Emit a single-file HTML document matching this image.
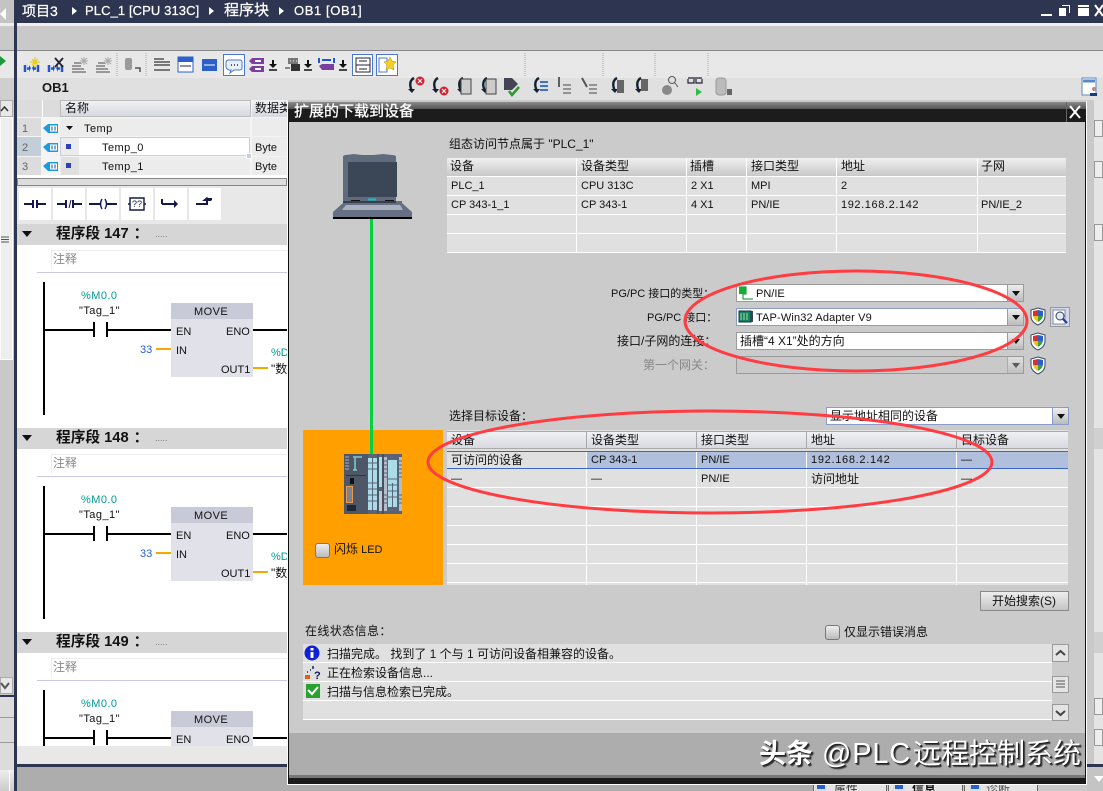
<!DOCTYPE html>
<html><head><meta charset="utf-8"><style>
html,body{margin:0;padding:0}
body{position:relative;width:1103px;height:791px;overflow:hidden;background:#c9c9c9;font-family:"Liberation Sans","Noto Sans CJK SC",sans-serif;font-size:11px;color:#111}
div{position:absolute;box-sizing:border-box}
.t{position:absolute;white-space:nowrap;height:16px;line-height:16px;font-size:11px}
.c{font-size:12px}
.h{background:linear-gradient(#f0f1f4,#d6d9e0)}
.l{background:#fff}
.sel{border:1px solid #9a9a9a;background:#fff}
.ar{right:0;top:0;bottom:0;width:16px;background:linear-gradient(#eee,#bbb);border-left:1px solid #9a9a9a}
.ar:after{content:"";position:absolute;left:4px;top:6px;border:4px solid transparent;border-top:5px solid #111;border-bottom:0}
.cb{width:15px;height:15px;border:1px solid #777;border-radius:3px;background:linear-gradient(#eee,#bbb)}
.sb{background:#e4e4e4;border:1px solid #9a9a9a}
.sec{left:39px;top:2px;font-size:14.700px;font-weight:bold}
.sec i{font-style:normal;margin-left:5px}
.ls{letter-spacing:.45px}
svg{position:absolute;overflow:visible}
</style></head><body>

<!-- left strip -->
<div style="left:0;top:0;width:14px;height:23px;background:#c4c4c4"></div>
<div style="left:0;top:8px;width:0;height:0;border:6px solid transparent;border-left:0;border-right:6px solid #fff"></div>
<div style="left:0;top:23px;width:14px;height:3px;background:#eee"></div>
<div style="left:0;top:50px;width:14px;height:28px;background:#e8e8e8;border-top:1px solid #888"></div>
<div style="left:0;top:78px;width:14px;height:22px;background:#cfcfcf"></div>
<div style="left:0;top:100px;width:13px;height:17px;background:#e8e8e8;border:1px solid #aaa"></div>
<div style="left:0;top:117px;width:13px;height:243px;background:#eee;border:1px solid #fff"></div>
<div style="left:0;top:360px;width:14px;height:317px;background:#c9c9c9"></div>
<div style="left:0;top:677px;width:13px;height:17px;background:#e8e8e8;border:1px solid #aaa"></div>
<div style="left:0;top:695px;width:17px;height:2px;background:#2d3550"></div>
<div style="left:0;top:697px;width:14px;height:94px;background:#dcdcdc"></div>
<div style="left:0;top:717px;width:14px;height:1px;background:#999"></div>
<div style="left:0;top:742px;width:14px;height:1px;background:#999"></div>
<div style="left:0;top:770px;width:14px;height:21px;background:linear-gradient(#eee,#ccc)"></div>
<div style="left:9px;top:770px;width:1px;height:21px;background:#fff"></div>
<svg style="left:0;top:0" width="14" height="80"><path d="M0 56l6 5-6 5z" fill="#1f9a3a"/></svg>
<div style="left:14px;top:0;width:3px;height:791px;background:#2d3550"></div>

<!-- title bar -->
<div style="left:17px;top:0;width:1086px;height:23px;background:#2d3550"></div>
<div style="left:17px;top:23px;width:1086px;height:3px;background:#efefef"></div>
<div style="left:17px;top:26px;width:1086px;height:24px;background:#c9c9c9"></div>
<div class="t" style="left:22px;top:3px;color:#fff;font-size:14px;-webkit-text-stroke:.25px #fff">项目3</div>
<div style="left:72px;top:7px;border:4px solid transparent;border-left:5px solid #fff;border-right:0"></div>
<div class="t" style="left:85px;top:3px;color:#fff;font-size:13px;letter-spacing:.1px;-webkit-text-stroke:.25px #fff">PLC_1 [CPU 313C]</div>
<div style="left:209px;top:7px;border:4px solid transparent;border-left:5px solid #fff;border-right:0"></div>
<div class="t" style="left:224px;top:3px;color:#fff;font-size:15px;-webkit-text-stroke:.25px #fff">程序块</div>
<div style="left:279px;top:7px;border:4px solid transparent;border-left:5px solid #fff;border-right:0"></div>
<div class="t" style="left:294px;top:3px;color:#fff;font-size:13px;letter-spacing:.6px;-webkit-text-stroke:.25px #fff">OB1 [OB1]</div>
<div style="left:1041px;top:14px;width:11px;height:2px;background:#fff"></div>
<div style="left:1059px;top:8px;width:7px;height:8px;background:#fff"></div>
<div style="left:1062px;top:5px;width:8px;height:8px;border:1px solid #fff;border-left:0;border-bottom:0"></div>
<div style="left:1078px;top:5px;width:11px;height:11px;background:#fff;border-top:3px solid #fff"></div>
<div style="left:1078px;top:7px;width:11px;height:1px;background:#2d3550"></div>
<svg style="left:0;top:0" width="1103" height="30"><path d="M1095 5l8 11M1103 5l-8 11" stroke="#fff" stroke-width="2"/></svg>

<!-- toolbar -->
<div style="left:17px;top:50px;width:1086px;height:28px;background:#e8e8e8;border-top:1px solid #8a8a8a"></div>
<div style="left:17px;top:78px;width:1086px;height:22px;background:#e0e0e0"></div>
<div class="t" style="left:42px;top:80px;font-size:13px;font-weight:bold;color:#1b1b1b">OB1</div>
<div style="left:223px;top:54px;width:22px;height:22px;background:#fff;border:1px solid #4a78cf"></div>
<div style="left:352px;top:54px;width:21px;height:22px;background:#fff;border:1px solid #4a78cf"></div>
<div style="left:376px;top:54px;width:22px;height:22px;background:#fff;border:1px solid #4a78cf"></div>

<svg style="left:0;top:0" width="1103" height="100">
<defs>
<g id="kh"><path d="M1 9v7M14 9v7M3 12.500h3M12 12.500h-3" stroke="#2256cc" stroke-width="2.500" fill="none"/><path d="M5 9l2 3-2 4zM10 9l-2 3 2 4z" fill="#2256cc"/></g>
<g id="gl"><path d="M0 9h9M0 12h12M0 15h14M2 6h7" stroke="#999" stroke-width="2"/><path d="M12 0v8M8 4h8M9 1l6 6M15 1l-6 6" stroke="#aaa" stroke-width="1"/></g>
<g id="ua"><path d="M7 2C3 4 2 9 5 15" stroke="#123" stroke-width="2.400" fill="none"/><path d="M1 13l4 4 3-4z" fill="#123"/></g>
<g id="dn"><path d="M4 0v6" stroke="#111" stroke-width="2"/><path d="M0 4h8l-4 4z" fill="#111"/><path d="M0 10h8" stroke="#111" stroke-width="1.500"/></g>
<g id="tg"><path d="M0 4l3-3h12v6H3zM0 12l3-3h12v6H3z" fill="#7a3fa0"/><path d="M6 3h6v2H6zM6 11h6v2H6z" fill="#fff"/></g>
<g id="red"><circle cx="0" cy="0" r="4.500" fill="#d42030"/><path d="M-2-2l4 4M2-2l-4 4" stroke="#fff" stroke-width="1.200"/></g>
</defs>
<path d="M117 53v23M146 53v23M525 53v23M603 53v23M655 53v23M708 53v23" stroke="#aaa" stroke-dasharray="1 1"/>
<use href="#kh" x="24" y="56"/><path d="M35 57v10M30 62h10M32 59l6 6M38 59l-6 6" stroke="#e8d020" stroke-width="1.300"/>
<use href="#kh" x="48" y="56"/><path d="M55 58l8 9M63 58l-8 9" stroke="#223" stroke-width="1.800"/>
<use href="#gl" x="72" y="57"/><use href="#gl" x="96" y="57"/>
<rect x="125" y="58" width="7" height="12" rx="2" fill="#9a9a9a"/><path d="M140 72v-4h-5" stroke="#555" stroke-width="1.500" fill="none"/>
<path d="M154 59h10M154 62h16M154 65h16M154 70h16" stroke="#777" stroke-width="2"/>
<rect x="178" y="57" width="15" height="15" fill="#fff" stroke="#2a60c8"/><rect x="178" y="57" width="15" height="5" fill="#2a60c8"/><path d="M180 66h11" stroke="#224"/>
<rect x="202" y="59" width="15" height="12" fill="#2a60c8"/><path d="M204 65h11" stroke="#fff"/>
<path d="M228 60h12a2 2 0 0 1 2 2v6a2 2 0 0 1-2 2h-6l-4 3 1-3a4 4 0 0 1-5-3v-5a3 3 0 0 1 2-2z" fill="#e8f0fa" stroke="#4a78cf"/><path d="M231 65h1M234 65h1M237 65h1" stroke="#223" stroke-width="1.500"/>
<use href="#tg" x="249" y="57"/><use href="#dn" x="269" y="60"/>
<path d="M288 58h10v6h-10z" fill="#777"/><path d="M290 61h1M293 61h1M296 61h1" stroke="#fff"/><rect x="291" y="64" width="9" height="7" fill="#333"/><path d="M285 68h5" stroke="#222"/><use href="#dn" x="304" y="60"/>
<path d="M319 58v5M334 58v5M322 60h9" stroke="#2256cc" stroke-width="2"/><path d="M319 66l3-2h12v6h-12z" fill="#7a3fa0"/><use href="#dn" x="339" y="60"/>
<rect x="356" y="58" width="14" height="14" fill="#fff" stroke="#223"/><path d="M356 65h14M359 61h8M359 69h8" stroke="#223"/>
<rect x="379" y="58" width="8" height="14" fill="#fff" stroke="#4a78cf"/><path d="M390 57l2 4 4 1-3 3 1 5-4-2-4 2 1-5-3-3 4-1z" fill="#f6d020" stroke="#b08810" stroke-width=".5"/>
<use href="#ua" x="407" y="76"/><use href="#red" x="420" y="81"/>
<use href="#ua" x="431" y="76"/><use href="#red" x="444" y="91"/>
<use href="#ua" x="456" y="76"/><rect x="461" y="79" width="10" height="15" fill="#ccc" stroke="#444"/>
<use href="#ua" x="480" y="76"/><rect x="486" y="79" width="10" height="15" fill="#ccc" stroke="#444"/>
<path d="M504 78h8l6 6-6 6h-8z" fill="#445"/><path d="M509 91l3 4 7-8" stroke="#2a9a30" stroke-width="2.500" fill="none"/>
<use href="#ua" x="532" y="76"/><path d="M540 82h8M540 86h8M540 90h8" stroke="#2a60c8" stroke-width="1.700"/>
<path d="M559 77v10" stroke="#333" stroke-width="1.500"/><path d="M563 85h8M563 89h8M563 93h8" stroke="#888" stroke-width="1.700"/>
<path d="M582 78l5 9" stroke="#555" stroke-width="2"/><path d="M589 85h8M589 89h8M589 93h8" stroke="#888" stroke-width="1.700"/>
<use href="#ua" x="610" y="76"/><rect x="617" y="80" width="7" height="13" fill="#666"/>
<use href="#ua" x="634" y="76"/><rect x="641" y="79" width="7" height="12" fill="#666"/>
<circle cx="667" cy="90" r="5" fill="#888"/><circle cx="672" cy="80" r="3.500" fill="none" stroke="#555"/><path d="M675 83l3 4" stroke="#555"/>
<path d="M688 78h14M688 79v4h6v-4M696 79v4h6v-4" fill="none" stroke="#223" stroke-width="1.200"/><path d="M696 88l6 4-6 4z" fill="#2cc040"/>
<rect x="716" y="78" width="10" height="17" rx="3" fill="#bbb" stroke="#999"/><rect x="727" y="89" width="5" height="6" fill="#666"/>
<rect x="1082" y="78" width="14" height="17" fill="#fff" stroke="#5a88c8"/><path d="M1083 81h12" stroke="#5a88c8" stroke-width="3"/><circle cx="1094" cy="89" r="2" fill="#b88"/><path d="M1090 96v-3h7v3z" fill="#1a3a80"/>
</svg>

<!-- left editor table -->
<div style="left:17px;top:100px;width:270px;height:78px;background:#f4f4f4"></div>
<div style="left:17px;top:100px;width:25px;height:17px;background:#dcdcdc"></div>
<div style="left:42px;top:100px;width:18px;height:17px;background:#dcdcdc;border-left:1px solid #fff"></div>
<div class="h" style="left:60px;top:100px;width:191px;height:17px;border:1px solid #bbb"></div>
<div class="h" style="left:252px;top:100px;width:36px;height:17px"></div>
<div class="t c" style="left:65px;top:100px">名称</div>
<div class="t c" style="left:255px;top:100px">数据类型</div>
<div style="left:17px;top:118px;width:24px;height:18px;background:#dcdcdc"></div>
<div style="left:17px;top:137px;width:24px;height:19px;background:#c2ced8"></div>
<div style="left:17px;top:157px;width:24px;height:18px;background:#dcdcdc"></div>
<div style="left:60px;top:118px;width:190px;height:18px;background:#ececec"></div>
<div style="left:60px;top:137px;width:190px;height:19px;background:#fff;border:1px solid #c4d0de"></div>
<div style="left:61px;top:138px;width:18px;height:17px;background:#ececec"></div>
<div style="left:60px;top:157px;width:190px;height:18px;background:#ececec"></div>
<div style="left:61px;top:157px;width:18px;height:18px;background:#e0e0e0"></div>
<div style="left:252px;top:118px;width:36px;height:18px;background:#ececec"></div>
<div style="left:252px;top:137px;width:36px;height:19px;background:#ececec"></div>
<div style="left:252px;top:157px;width:36px;height:18px;background:#ececec"></div>
<div style="left:246px;top:153px;width:6px;height:6px;background:#c4d0de;border:1px solid #fff"></div>
<div class="t" style="left:22px;top:121px;color:#666">1</div>
<div class="t" style="left:22px;top:140px;color:#666">2</div>
<div class="t" style="left:22px;top:159px;color:#666">3</div>
<svg style="left:0;top:0" width="300" height="180">
<defs><g id="rt"><path d="M0 6l5-4h10v9H5z" fill="#1c9ae0"/><rect x="7" y="3.500" width="7" height="6" fill="#fff"/><path d="M9 4.500v4M12 4.500v4" stroke="#16508c"/></g></defs>
<use href="#rt" x="43" y="122"/><use href="#rt" x="43" y="141"/><use href="#rt" x="43" y="160"/>
<path d="M66 126h7l-3.500 4z" fill="#111"/>
<rect x="66" y="144" width="5" height="5" fill="#2a44b8"/><rect x="66" y="163" width="5" height="5" fill="#2a44b8"/>
<path d="M1 111l3.500-4 3.500 4" fill="none" stroke="#333" stroke-width="1.500"/>
<path d="M1 683l4 5 4-5" fill="none" stroke="#555" stroke-width="2"/>
<path d="M1 237h8M1 239.500h8M1 242h8" stroke="#555"/>
</svg>
<div class="t ls" style="left:84px;top:121px">Temp</div>
<div class="t ls" style="left:102px;top:140px">Temp_0</div>
<div class="t ls" style="left:102px;top:159px">Temp_1</div>
<div class="t" style="left:255px;top:140px">Byte</div>
<div class="t" style="left:255px;top:159px">Byte</div>
<div style="left:17px;top:175px;width:270px;height:3px;background:#fff"></div>
<div style="left:17px;top:178px;width:270px;height:8px;background:#ddd;border:1px solid #888"></div>

<!-- LAD toolbar + editor -->
<div style="left:17px;top:186px;width:270px;height:38px;background:#e8e8e8"></div>
<div class="l" style="left:19px;top:188px;width:32px;height:32px"></div>
<div class="l" style="left:53px;top:188px;width:32px;height:32px"></div>
<div class="l" style="left:87px;top:188px;width:32px;height:32px"></div>
<div class="l" style="left:121px;top:188px;width:32px;height:32px"></div>
<div class="l" style="left:155px;top:188px;width:32px;height:32px"></div>
<div class="l" style="left:189px;top:188px;width:32px;height:32px"></div>
<svg style="left:0;top:0" width="300" height="225">
<path d="M24 204h9M33 200v8M37 200v8M37 204h9M57 204h9M66 200v8M73 200v8M73 204h9M89 204h11M106 204h11M162 204h14M196 204h11v-5h5" stroke="#14184a" stroke-width="2" fill="none"/>
<path d="M69 208l2-8" stroke="#14184a"/>
<path d="M102 199q-3 5 0 10M105 199q3 5 0 10" stroke="#14184a" stroke-width="1.400" fill="none"/>
<path d="M162 199v5" stroke="#14184a" stroke-width="2"/>
<path d="M174 200l4 4-4 4z" fill="#14184a"/><path d="M207 197l5 4h-10z" fill="#14184a"/>
<path d="M130 198h14v12h-14zM128 204h2M144 204h2" stroke="#14184a" stroke-width="1.400" fill="none"/>
<text x="132" y="207" font-family="Liberation Sans" font-size="9" fill="#14184a">??</text>
</svg>

<div style="left:17px;top:224px;width:270px;height:522px;background:#fff;overflow:hidden">
  <!-- section 1 -->
  <div style="left:0;top:0;width:270px;height:204px">
    <div style="left:0;top:0;width:270px;height:21px;background:#d6d6d6"></div>
    <div style="left:5px;top:7px;border:5px solid transparent;border-top:6px solid #111;border-bottom:0"></div>
    <div class="t sec">程序段 147<i>：</i></div>
    <div class="t" style="left:138px;top:2px;color:#777;font-size:9px">.....</div>
    <div style="left:34px;top:26px;width:236px;height:20px;border:1px solid #eee;border-right:0;border-bottom:0"></div>
    <div class="t c" style="left:36px;top:27px;color:#888">注释</div>
    <div style="left:20px;top:48px;width:250px;height:1px;background:#c8c8e2"></div>
    <div style="left:26px;top:58px;width:2px;height:133px;background:#000"></div>
    <div style="left:28px;top:105px;width:48px;height:2px;background:#000"></div>
    <div style="left:76px;top:98px;width:2px;height:15px;background:#000"></div>
    <div style="left:89px;top:98px;width:2px;height:15px;background:#000"></div>
    <div style="left:89px;top:105px;width:65px;height:2px;background:#000"></div>
    <div style="left:154px;top:79px;width:82px;height:74px;background:#e0e1e9"></div>
    <div style="left:154px;top:79px;width:82px;height:16px;background:#c8cad8"></div>
    <div style="left:236px;top:105px;width:34px;height:2px;background:#000"></div>
    <div style="left:139px;top:124px;width:15px;height:2px;background:#f5a800"></div>
    <div style="left:236px;top:143px;width:15px;height:2px;background:#f5a800"></div>
    <div class="t ls" style="left:177px;top:80px">MOVE</div>
    <div class="t" style="left:159px;top:100px">EN</div>
    <div class="t" style="left:209px;top:100px">ENO</div>
    <div class="t" style="left:159px;top:119px">IN</div>
    <div class="t" style="left:204px;top:138px">OUT1</div>
    <div class="t" style="left:123px;top:118px;color:#2a60c8">33</div>
    <div class="t ls" style="left:64px;top:64px;color:#00989a">%M0.0</div>
    <div class="t ls" style="left:62px;top:79px">"Tag_1"</div>
    <div class="t" style="left:254px;top:121px;color:#00989a">%D</div>
    <div class="t c" style="left:254px;top:137px">"数</div>
  </div>
  <!-- section 2 -->
  <div style="left:0;top:204px;width:270px;height:204px">
    <div style="left:0;top:0;width:270px;height:21px;background:#d6d6d6"></div>
    <div style="left:5px;top:7px;border:5px solid transparent;border-top:6px solid #111;border-bottom:0"></div>
    <div class="t sec">程序段 148<i>：</i></div>
    <div class="t" style="left:138px;top:2px;color:#777;font-size:9px">.....</div>
    <div style="left:34px;top:26px;width:236px;height:20px;border:1px solid #eee;border-right:0;border-bottom:0"></div>
    <div class="t c" style="left:36px;top:27px;color:#888">注释</div>
    <div style="left:20px;top:48px;width:250px;height:1px;background:#c8c8e2"></div>
    <div style="left:26px;top:58px;width:2px;height:133px;background:#000"></div>
    <div style="left:28px;top:105px;width:48px;height:2px;background:#000"></div>
    <div style="left:76px;top:98px;width:2px;height:15px;background:#000"></div>
    <div style="left:89px;top:98px;width:2px;height:15px;background:#000"></div>
    <div style="left:89px;top:105px;width:65px;height:2px;background:#000"></div>
    <div style="left:154px;top:79px;width:82px;height:74px;background:#e0e1e9"></div>
    <div style="left:154px;top:79px;width:82px;height:16px;background:#c8cad8"></div>
    <div style="left:236px;top:105px;width:34px;height:2px;background:#000"></div>
    <div style="left:139px;top:124px;width:15px;height:2px;background:#f5a800"></div>
    <div style="left:236px;top:143px;width:15px;height:2px;background:#f5a800"></div>
    <div class="t ls" style="left:177px;top:80px">MOVE</div>
    <div class="t" style="left:159px;top:100px">EN</div>
    <div class="t" style="left:209px;top:100px">ENO</div>
    <div class="t" style="left:159px;top:119px">IN</div>
    <div class="t" style="left:204px;top:138px">OUT1</div>
    <div class="t" style="left:123px;top:118px;color:#2a60c8">33</div>
    <div class="t ls" style="left:64px;top:64px;color:#00989a">%M0.0</div>
    <div class="t ls" style="left:62px;top:79px">"Tag_1"</div>
    <div class="t" style="left:254px;top:121px;color:#00989a">%D</div>
    <div class="t c" style="left:254px;top:137px">"数</div>
  </div>
  <!-- section 3 -->
  <div style="left:0;top:408px;width:270px;height:114px;overflow:hidden">
    <div style="left:0;top:0;width:270px;height:21px;background:#d6d6d6"></div>
    <div style="left:5px;top:7px;border:5px solid transparent;border-top:6px solid #111;border-bottom:0"></div>
    <div class="t sec">程序段 149<i>：</i></div>
    <div class="t" style="left:138px;top:2px;color:#777;font-size:9px">.....</div>
    <div style="left:34px;top:26px;width:236px;height:20px;border:1px solid #eee;border-right:0;border-bottom:0"></div>
    <div class="t c" style="left:36px;top:27px;color:#888">注释</div>
    <div style="left:20px;top:48px;width:250px;height:1px;background:#c8c8e2"></div>
    <div style="left:26px;top:58px;width:2px;height:133px;background:#000"></div>
    <div style="left:28px;top:105px;width:48px;height:2px;background:#000"></div>
    <div style="left:76px;top:98px;width:2px;height:15px;background:#000"></div>
    <div style="left:89px;top:98px;width:2px;height:15px;background:#000"></div>
    <div style="left:89px;top:105px;width:65px;height:2px;background:#000"></div>
    <div style="left:154px;top:79px;width:82px;height:74px;background:#e0e1e9"></div>
    <div style="left:154px;top:79px;width:82px;height:16px;background:#c8cad8"></div>
    <div style="left:236px;top:105px;width:34px;height:2px;background:#000"></div>
    <div class="t ls" style="left:177px;top:80px">MOVE</div>
    <div class="t" style="left:159px;top:100px">EN</div>
    <div class="t" style="left:209px;top:100px">ENO</div>
    <div class="t ls" style="left:64px;top:64px;color:#00989a">%M0.0</div>
    <div class="t ls" style="left:62px;top:79px">"Tag_1"</div>
  </div>
</div>
<div style="left:17px;top:746px;width:270px;height:18px;background:#e8e8e8"></div>
<div style="left:17px;top:764px;width:270px;height:3px;background:#2d3550"></div>
<div style="left:17px;top:767px;width:270px;height:24px;background:#adadad"></div>

<!-- right strip -->
<div style="left:1087px;top:100px;width:16px;height:691px;background:#c9c9c9"></div>
<div style="left:1094px;top:100px;width:9px;height:664px;background:#e4e4e4"></div>
<div style="left:1094px;top:120px;width:9px;height:17px;background:#eee;border:1px solid #999"></div>
<div style="left:1094px;top:161px;width:9px;height:17px;background:#eee;border:1px solid #999"></div>
<div style="left:1094px;top:224px;width:9px;height:17px;background:#eee;border:1px solid #999"></div>
<div style="left:1094px;top:428px;width:9px;height:21px;background:#d0d0d0"></div>
<div style="left:1094px;top:632px;width:9px;height:21px;background:#d0d0d0"></div>
<div style="left:1094px;top:698px;width:9px;height:17px;background:#eee;border:1px solid #999"></div>
<div style="left:1094px;top:729px;width:9px;height:17px;background:#eee;border:1px solid #999"></div>
<div style="left:1087px;top:764px;width:16px;height:3px;background:#2d3550"></div>
<div style="left:1087px;top:767px;width:16px;height:24px;background:#c4c4c4"></div>
<div style="left:1094px;top:776px;border:5px solid transparent;border-top:6px solid #fff;border-bottom:0"></div>

<!-- bottom tabs -->
<div style="left:287px;top:785px;width:526px;height:6px;background:#adadad"></div>
<div style="left:813px;top:785px;width:74px;height:6px;background:#e4e4e4;border-left:1px solid #666;border-right:1px solid #666"></div>
<div style="left:888px;top:785px;width:75px;height:6px;background:#e4e4e4;border-left:1px solid #666;border-right:1px solid #666"></div>
<div style="left:964px;top:785px;width:74px;height:6px;background:#e4e4e4;border-left:1px solid #666;border-right:1px solid #666"></div>
<div style="left:815px;top:785px;width:12px;height:6px;background:#2a60c8;border:2px solid #ddd;border-top:0"></div>
<div style="left:893px;top:785px;width:12px;height:6px;background:#2a60c8;border:2px solid #ddd;border-top:0"></div>
<div style="left:969px;top:785px;width:12px;height:6px;background:#2a60c8;border:2px solid #ddd;border-top:0"></div>
<div style="left:834px;top:779px;height:12px;width:40px;overflow:hidden;clip-path:inset(6px 0 0 0)"><div class="t c" style="left:0;top:2px;color:#333">属性</div></div>
<div style="left:912px;top:779px;height:12px;width:40px;overflow:hidden;clip-path:inset(6px 0 0 0)"><div class="t c" style="left:0;top:2px;font-weight:bold">信息</div></div>
<div style="left:986px;top:779px;height:12px;width:40px;overflow:hidden;clip-path:inset(6px 0 0 0)"><div class="t c" style="left:0;top:2px;color:#555">诊断</div></div>

<!-- dialog -->
<div style="left:287px;top:101px;width:800px;height:684px;border:1px solid #fff;border-top:0"></div>
<div style="left:288px;top:102px;width:798px;height:682px;background:#cbcbcb;border-right:1px solid #111;border-left:1px solid #111"></div>
<div style="left:288px;top:102px;width:798px;height:20px;background:linear-gradient(#8a8a8a 0,#555 35%,#1c1c1c 36%,#1c1c1c 100%)"></div>
<div class="t" style="left:294px;top:103px;color:#fff;font-size:15px;-webkit-text-stroke:.3px #fff;height:18px;line-height:18px">扩展的下载到设备</div>
<div style="left:1066px;top:102px;width:1px;height:20px;background:#666"></div>
<svg style="left:0;top:0" width="1103" height="125"><path d="M1070 106l10 12M1080 106l-10 12" stroke="#fff" stroke-width="2"/></svg>
<div style="left:289px;top:733px;width:796px;height:42px;background:#adadad"></div>
<div style="left:289px;top:775px;width:796px;height:3px;background:#777"></div>
<div style="left:289px;top:778px;width:796px;height:6px;background:#1a1a1a"></div>

<!-- laptop -->
<svg style="left:300px;top:130px" width="150" height="100">
<path d="M43 27q0-2 3-2l8-1 8 1h12l9-1 9 1q4 0 4 2v46H43z" fill="#616b7e"/>
<rect x="48" y="32" width="49" height="35" fill="#3b4657"/>
<rect x="68" y="68.500" width="8" height="2" fill="#14c0c8"/>
<path d="M51 70.500h9M85 70.500h9" stroke="#111"/>
<path d="M43 72h59" stroke="#111"/>
<path d="M43 73h59l10 9v5H33v-5z" fill="#667085"/>
<path d="M46 75h54l3 5H42z" fill="#aab2c2"/>
<rect x="33" y="87" width="79" height="2" fill="#000"/>
</svg>
<div style="left:370px;top:219px;width:3px;height:211px;background:#05d040"></div>

<!-- top table -->
<div class="t c" style="left:449px;top:136px">组态访问节点属于 "PLC_1"</div>
<div style="left:447px;top:158px;width:619px;height:94px;background:#e0e0e0"></div>
<div style="left:447px;top:158px;width:619px;height:18px;background:linear-gradient(#f0f0f0,#c8c8c8)"></div>
<div class="l" style="left:447px;top:176px;width:619px;height:1px"></div>
<div class="l" style="left:447px;top:195px;width:619px;height:1px"></div>
<div class="l" style="left:447px;top:214px;width:619px;height:1px"></div>
<div class="l" style="left:447px;top:233px;width:619px;height:1px"></div>
<div class="l" style="left:447px;top:252px;width:619px;height:1px"></div>
<div class="l" style="left:576px;top:158px;width:1px;height:94px"></div>
<div class="l" style="left:686px;top:158px;width:1px;height:94px"></div>
<div class="l" style="left:746px;top:158px;width:1px;height:94px"></div>
<div class="l" style="left:836px;top:158px;width:1px;height:94px"></div>
<div class="l" style="left:977px;top:158px;width:1px;height:94px"></div>
<div class="t c" style="left:450px;top:158px">设备</div>
<div class="t c" style="left:581px;top:158px">设备类型</div>
<div class="t c" style="left:690px;top:158px">插槽</div>
<div class="t c" style="left:751px;top:158px">接口类型</div>
<div class="t c" style="left:841px;top:158px">地址</div>
<div class="t c" style="left:981px;top:158px">子网</div>
<div class="t" style="left:451px;top:178px">PLC_1</div>
<div class="t" style="left:581px;top:178px">CPU 313C</div>
<div class="t" style="left:691px;top:178px">2 X1</div>
<div class="t" style="left:751px;top:178px">MPI</div>
<div class="t" style="left:841px;top:178px">2</div>
<div class="t" style="left:451px;top:197px">CP 343-1_1</div>
<div class="t" style="left:581px;top:197px">CP 343-1</div>
<div class="t" style="left:691px;top:197px">4 X1</div>
<div class="t" style="left:751px;top:197px">PN/IE</div>
<div class="t" style="left:841px;top:197px;letter-spacing:.6px">192.168.2.142</div>
<div class="t" style="left:981px;top:197px">PN/IE_2</div>

<!-- form -->
<div class="t" style="left:611px;top:286px">PG/PC 接口的类型：</div>
<div class="t" style="left:647px;top:310px">PG/PC 接口：</div>
<div class="t c" style="left:617px;top:333px">接口/子网的连接：</div>
<div class="t c" style="left:643px;top:357px;color:#888">第一个网关：</div>
<div class="sel" style="left:736px;top:284px;width:288px;height:18px"><div class="ar"></div></div>
<div class="sel" style="left:736px;top:308px;width:288px;height:18px;border-color:#8a9cc8"><div class="ar" style="border-color:#8a9cc8"></div></div>
<div class="sel" style="left:736px;top:332px;width:288px;height:18px"><div class="ar"></div></div>
<div class="sel" style="left:736px;top:356px;width:288px;height:18px;background:#c9c9c9"><div class="ar" style="opacity:.6"></div></div>
<svg style="left:0;top:0" width="1103" height="400">
<defs><g id="sh"><path d="M7 0l7 2v6q0 6-7 9q-7-3-7-9V2z" fill="#fff" stroke="#3a4a60"/><path d="M7 2v6H2V3z" fill="#d83030"/><path d="M7 2l5 1v5H7z" fill="#2a60c8"/><path d="M2 8h5v6q-4-2-5-6z" fill="#f0c020"/><path d="M7 8h5q-1 4-5 6z" fill="#3aa040"/></g></defs>
<use href="#sh" x="1031" y="308"/><use href="#sh" x="1031" y="333"/><use href="#sh" x="1031" y="357"/>
<rect x="1050.500" y="307.500" width="19" height="19" fill="#d4d8e8" stroke="#999"/>
<rect x="1053" y="310" width="12" height="14" fill="#fff" stroke="#7a8ab0"/>
<circle cx="1060" cy="316" r="4" fill="#dfe8f4" stroke="#345"/><path d="M1063 319l4 4" stroke="#1a3a90" stroke-width="2"/>
<path d="M739 287h7v7h-3v5h10" fill="none" stroke="#008a20"/><rect x="739" y="287" width="7" height="7" fill="#10b030"/>
<rect x="739" y="311" width="12" height="11" fill="#178060" stroke="#134"/><path d="M741 313v7M744 313v7M747 313v7" stroke="#9fe0a0"/><rect x="751" y="311" width="2" height="11" fill="#345"/>
</svg>
<div class="t" style="left:756px;top:286px">PN/IE</div>
<div class="t" style="left:756px;top:310px;letter-spacing:.15px">TAP-Win32 Adapter V9</div>
<div class="t c" style="left:740px;top:333px">插槽“4 X1”处的方向</div>

<!-- target -->
<div class="t c" style="left:449px;top:408px">选择目标设备：</div>
<div class="sel" style="left:826px;top:407px;width:243px;height:18px;border-color:#8a9cc8"><div class="ar" style="border-color:#8a9cc8"></div></div>
<div class="t c" style="left:830px;top:408px">显示地址相同的设备</div>
<div style="left:303px;top:430px;width:140px;height:155px;background:#ff9f00"></div>
<div style="left:370px;top:430px;width:3px;height:25px;background:#05d040"></div>
<svg style="left:335px;top:445px" width="75" height="75">
<rect x="9" y="9" width="58" height="60" fill="#5a6476"/>
<rect x="9" y="9" width="24" height="60" fill="#4d5768"/>
<rect x="33" y="13" width="9" height="52" fill="#a9dbe8"/>
<path d="M33 18h9M33 24h9M33 38h9M33 44h9M33 50h9M33 56h9M37.500 13v52" stroke="#5a6476"/>
<rect x="44" y="12" width="3" height="30" fill="#a9dbe8"/><rect x="44" y="46" width="3" height="20" fill="#c0c8d0"/>
<rect x="49" y="12" width="3" height="54" fill="#b4bcc8"/>
<path d="M49 16h3M49 20h3M49 24h3M49 28h3M49 32h3M49 50h3M49 54h3M49 58h3" stroke="#5a6476"/>
<rect x="53" y="15" width="9" height="47" fill="#a9dbe8"/>
<path d="M53 34h9M53 40h9M53 46h9M53 52h9M57.500 38v24" stroke="#5a6476"/>
<rect x="64" y="12" width="3" height="54" fill="#b4bcc8"/>
<path d="M64 16h3M64 20h3M64 24h3M64 28h3M64 32h3M64 50h3M64 54h3M64 58h3" stroke="#5a6476"/>
<rect x="42.500" y="9" width="1" height="60" fill="#3e4757"/><rect x="47.500" y="9" width="1" height="60" fill="#333c4c"/>
<rect x="11" y="30" width="20" height="1" fill="#333"/>
<rect x="15" y="33" width="4" height="6" fill="#111"/>
<rect x="11.500" y="41.500" width="6" height="16" fill="#7a8494" stroke="#e89a50"/>
<rect x="12" y="60" width="9" height="6" fill="#202838"/>
<path d="M18 12h9M20 13v12M18 25h4" stroke="#7fd0d0" stroke-width="1.500" fill="none"/>
<path d="M10 12h4M10 15h4M10 18h4M10 21h4M10 24h4" stroke="#a8b0bc"/>
</svg>
<div class="cb" style="left:315px;top:543px"></div>
<div class="t" style="left:334px;top:541px;font-size:11px"><span style="font-size:12px">闪烁</span> LED</div>

<!-- target table -->
<div style="left:447px;top:430px;width:621px;height:155px;background:#e0e0e0"></div>
<div class="h" style="left:447px;top:431px;width:621px;height:18px;border-top:1px solid #aaa;border-bottom:1px solid #aaa"></div>
<div style="left:586px;top:451px;width:482px;height:18px;background:#b0c0dc"></div>
<div style="left:447px;top:451px;width:621px;height:1px;background:#3a66c8"></div>
<div style="left:447px;top:468px;width:621px;height:1px;background:#3a66c8"></div>
<div class="l" style="left:447px;top:487px;width:621px;height:1px"></div>
<div class="l" style="left:447px;top:506px;width:621px;height:1px"></div>
<div class="l" style="left:447px;top:525px;width:621px;height:1px"></div>
<div class="l" style="left:447px;top:544px;width:621px;height:1px"></div>
<div class="l" style="left:447px;top:563px;width:621px;height:1px"></div>
<div class="l" style="left:447px;top:582px;width:621px;height:1px"></div>
<div style="left:586px;top:431px;width:1px;height:18px;background:#aaa"></div>
<div style="left:696px;top:431px;width:1px;height:18px;background:#aaa"></div>
<div style="left:806px;top:431px;width:1px;height:18px;background:#aaa"></div>
<div style="left:956px;top:431px;width:1px;height:18px;background:#aaa"></div>
<div class="l" style="left:586px;top:469px;width:1px;height:116px"></div>
<div class="l" style="left:696px;top:469px;width:1px;height:116px"></div>
<div class="l" style="left:806px;top:469px;width:1px;height:116px"></div>
<div class="l" style="left:956px;top:469px;width:1px;height:116px"></div>
<div class="l" style="left:586px;top:452px;width:1px;height:16px"></div>
<div class="l" style="left:696px;top:452px;width:1px;height:16px"></div>
<div class="l" style="left:806px;top:452px;width:1px;height:16px"></div>
<div class="l" style="left:956px;top:452px;width:1px;height:16px"></div>
<div class="t c" style="left:451px;top:432px">设备</div>
<div class="t c" style="left:591px;top:432px">设备类型</div>
<div class="t c" style="left:701px;top:432px">接口类型</div>
<div class="t c" style="left:811px;top:432px">地址</div>
<div class="t c" style="left:961px;top:432px">目标设备</div>
<div class="t c" style="left:451px;top:452px">可访问的设备</div>
<div class="t" style="left:591px;top:452px">CP 343-1</div>
<div class="t" style="left:701px;top:452px">PN/IE</div>
<div class="t" style="left:811px;top:452px;letter-spacing:.7px">192.168.2.142</div>
<div class="t" style="left:961px;top:452px">—</div>
<div class="t" style="left:451px;top:471px">—</div>
<div class="t" style="left:591px;top:471px">—</div>
<div class="t" style="left:701px;top:471px">PN/IE</div>
<div class="t c" style="left:811px;top:471px">访问地址</div>
<div class="t" style="left:961px;top:471px">—</div>
<div style="left:980px;top:591px;width:89px;height:20px;background:linear-gradient(#eee,#c4c4c4);border:1px solid #8a8a8a"></div>
<div class="t c" style="left:992px;top:593px">开始搜索(S)</div>

<!-- status -->
<div class="t c" style="left:305px;top:623px;letter-spacing:.4px">在线状态信息：</div>
<div class="cb" style="left:825px;top:625px"></div>
<div class="t c" style="left:844px;top:624px">仅显示错误消息</div>
<div style="left:303px;top:644px;width:749px;height:76px;background:#e0e0e0"></div>
<div class="l" style="left:303px;top:662px;width:749px;height:1px"></div>
<div class="l" style="left:303px;top:681px;width:749px;height:1px"></div>
<div class="l" style="left:303px;top:700px;width:749px;height:1px"></div>
<div class="l" style="left:303px;top:719px;width:749px;height:1px"></div>
<div class="sb" style="left:1052px;top:644px;width:17px;height:18px"></div>
<div class="sb" style="left:1052px;top:676px;width:17px;height:17px"></div>
<div class="sb" style="left:1052px;top:704px;width:17px;height:17px"></div>
<svg style="left:0;top:0" width="1103" height="730">
<path d="M1056 655l4.500-4 4.500 4M1056 711l4.500 4 4.500-4" fill="none" stroke="#444" stroke-width="2"/>
<path d="M1056 681h9M1056 684h9M1056 687h9" stroke="#555"/>
<circle cx="312" cy="653" r="7.500" fill="#1020d8"/><rect x="310.500" y="652" width="3" height="6" fill="#fff"/><rect x="310.500" y="648" width="3" height="2.500" fill="#fff"/>
<rect x="305" y="675" width="5" height="4" fill="#e85a10"/><path d="M307 672h1M310 670h1M313 666v3" stroke="#14245a" stroke-width="1.500"/>
<text x="314" y="679" font-family="Liberation Sans" font-size="11" font-weight="bold" fill="#14145a">?</text>
<rect x="306" y="684" width="14" height="14" fill="#2aa030"/><path d="M308 690l4 4 6-7" stroke="#fff" stroke-width="2" fill="none"/>
</svg>
<div class="t c" style="left:327px;top:646px">扫描完成。 找到了 1 个与 1 可访问设备相兼容的设备。</div>
<div class="t c" style="left:327px;top:665px">正在检索设备信息...</div>
<div class="t c" style="left:327px;top:684px">扫描与信息检索已完成。</div>

<!-- red ellipses -->
<svg style="left:0;top:0" width="1103" height="791">
<ellipse cx="856" cy="321" rx="171" ry="50" fill="none" stroke="#ff3c42" stroke-width="3"/>
<ellipse cx="710" cy="462" rx="282" ry="51" fill="none" stroke="#ff3c42" stroke-width="3"/>
</svg>

<!-- watermark -->
<div class="t" style="left:759px;top:737px;height:34px;line-height:34px;font-size:27px;color:#fff;text-shadow:1px 1px 0 #222,2px 2px 1px #333;font-weight:bold">头条</div>
<div class="t" style="left:822px;top:737px;height:34px;line-height:34px;font-size:29px;letter-spacing:.8px;color:#fff;text-shadow:1px 1px 0 #222,2px 2px 1px #333">@PLC</div>
<div class="t" style="left:913px;top:737px;height:34px;line-height:34px;font-size:28px;color:#fff;text-shadow:1px 1px 0 #222,2px 2px 1px #333">远程控制系统</div>
</body></html>
